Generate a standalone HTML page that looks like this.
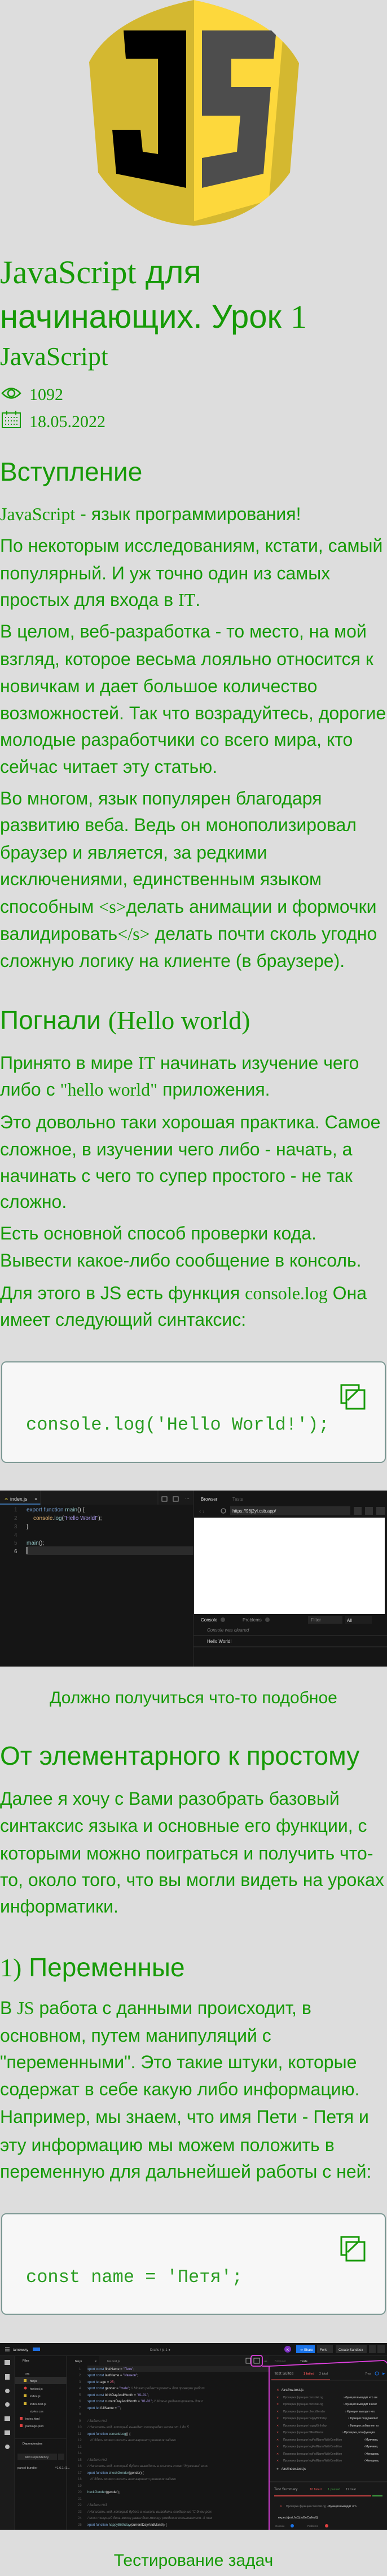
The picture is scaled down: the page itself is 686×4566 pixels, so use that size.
<!DOCTYPE html>
<html><head><meta charset="utf-8"><style>
*{margin:0;padding:0;box-sizing:border-box}
html,body{width:686px;height:4566px;background:#dddddd;overflow:hidden}
body{position:relative;font-family:"Liberation Sans",Arial,sans-serif;color:#169a06}
.t{position:absolute;left:0;white-space:nowrap;font-size:32px;line-height:32px}
.h2{font-size:46px;line-height:46px}
.ti{font-size:58px;line-height:58px}
.s{font-family:"Liberation Serif",serif}
.code{position:absolute;left:2px;width:682px;height:180px;background:#f7f7f7;border:2px solid #7c9893;border-radius:9px}
.code .c{position:absolute;left:42px;font-family:"Liberation Mono","Courier New",monospace;font-size:32px;line-height:32px;color:#2a9d22;white-space:pre}
.cap{position:absolute;left:0;width:686px;text-align:center;font-size:30px;line-height:30px;white-space:nowrap}
svg text{font-family:"Liberation Sans",sans-serif}
.m{font-family:"Liberation Mono",monospace}
</style></head><body>

<!-- logo -->
<svg style="position:absolute;left:0;top:0" width="686" height="402" viewBox="0 0 686 402">
<defs><clipPath id="sh"><path d="M158,110 Q200,30 343,0 Q486,30 530,112 L514,306 Q450,395 343,400 Q236,395 174,306 Z"/></clipPath></defs>
<g clip-path="url(#sh)">
<rect x="150" y="0" width="390" height="402" fill="#d4b830"/>
<polygon points="344,0 540,0 501,70 477,350 466,358 344,392" fill="#fdd83c"/>
</g>
<polygon points="219,54 330,54 330,333 206,308 199,230 249,230 253,269 280,273 280,104 223,104" fill="#000"/>
<polygon points="358,54 481,54 489,62 485,104 410,104 410,154 480,154 467,308 358,333 358,280 420,269 426,205 358,205" fill="#4d4d4d"/>
</svg>

<div class="t ti" style="top:454px"><span class="s">JavaScript</span> для</div>
<div class="t ti" style="top:533px">начинающих. Урок <span class="s">1</span></div>
<div class="t s" style="top:609px;font-size:46px;line-height:46px">JavaScript</div>
<svg style="position:absolute;left:2px;top:684px" width="36" height="26" viewBox="0 0 36 26"><path d="M2,13 Q18,-4 34,13 Q18,30 2,13 Z" fill="none" stroke="#169a06" stroke-width="2.5"/><circle cx="18" cy="13" r="6" fill="none" stroke="#169a06" stroke-width="2.5"/></svg>
<div class="t s" style="top:685px;left:52px;font-size:30px;line-height:30px">1092</div>
<svg style="position:absolute;left:2px;top:727px" width="36" height="33" viewBox="0 0 36 33"><rect x="2" y="5" width="32" height="26" fill="none" stroke="#169a06" stroke-width="2"/><line x1="10" y1="1" x2="10" y2="8" stroke="#169a06" stroke-width="2"/><line x1="26" y1="1" x2="26" y2="8" stroke="#169a06" stroke-width="2"/><g fill="#169a06"><rect x="7" y="12" width="2" height="2"/><rect x="12" y="12" width="2" height="2"/><rect x="17" y="12" width="2" height="2"/><rect x="22" y="12" width="2" height="2"/><rect x="27" y="12" width="2" height="2"/><rect x="7" y="18" width="2" height="2"/><rect x="12" y="18" width="2" height="2"/><rect x="17" y="18" width="2" height="2"/><rect x="22" y="18" width="2" height="2"/><rect x="27" y="18" width="2" height="2"/><rect x="7" y="24" width="2" height="2"/><rect x="12" y="24" width="2" height="2"/><rect x="17" y="24" width="2" height="2"/><rect x="22" y="24" width="2" height="2"/><rect x="27" y="24" width="2" height="2"/></g></svg>
<div class="t s" style="top:733px;left:52px;font-size:30px;line-height:30px">18.05.2022</div>

<div class="t h2" style="top:813px">Вступление</div>
<div class="t" style="top:895px"><span class="s">JavaScript</span> - язык программирования!</div>
<div class="t" style="top:951px">По некоторым исследованиям, кстати, самый</div>
<div class="t" style="top:1000px">популярный. И уж точно один из самых</div>
<div class="t" style="top:1047px">простых для входа в <span class="s">IT</span>.</div>
<div class="t" style="top:1103px">В целом, веб-разработка - то место, на мой</div>
<div class="t" style="top:1152px">взгляд, которое весьма лояльно относится к</div>
<div class="t" style="top:1200px">новичкам и дает большое количество</div>
<div class="t" style="top:1248px">возможностей. Так что возрадуйтесь, дорогие</div>
<div class="t" style="top:1295px">молодые разработчики со всего мира, кто</div>
<div class="t" style="top:1343px">сейчас читает эту статью.</div>
<div class="t" style="top:1399px">Во многом, язык популярен благодаря</div>
<div class="t" style="top:1446px">развитию веба. Ведь он монополизировал</div>
<div class="t" style="top:1495px">браузер и является, за редкими</div>
<div class="t" style="top:1542px">исключениями, единственным языком</div>
<div class="t" style="top:1591px">способным <span class="s">&lt;s&gt;</span>делать анимации и формочки</div>
<div class="t" style="top:1639px">валидировать<span class="s">&lt;/s&gt;</span> делать почти сколь угодно</div>
<div class="t" style="top:1687px">сложную логику на клиенте (в браузере).</div>

<div class="t h2" style="top:1785px">Погнали <span class="s">(Hello world)</span></div>
<div class="t" style="top:1868px">Принято в мире <span class="s">IT</span> начинать изучение чего</div>
<div class="t" style="top:1915px">либо с <span class="s">"hello world"</span> приложения.</div>
<div class="t" style="top:1973px">Это довольно таки хорошая практика. Самое</div>
<div class="t" style="top:2021px">сложное, в изучении чего либо - начать, а</div>
<div class="t" style="top:2068px">начинать с чего то супер простого - не так</div>
<div class="t" style="top:2114px">сложно.</div>
<div class="t" style="top:2170px">Есть основной способ проверки кода.</div>
<div class="t" style="top:2218px">Вывести какое-либо сообщение в консоль.</div>
<div class="t" style="top:2276px">Для этого в JS есть функция <span class="s">console.log</span> Она</div>
<div class="t" style="top:2323px">имеет следующий синтаксис:</div>

<div class="code" style="top:2413px">
<svg style="position:absolute;left:599px;top:38px" width="46" height="46" viewBox="0 0 46 46"><rect x="2" y="2" width="31" height="32" fill="none" stroke="#169a06" stroke-width="3"/><rect x="11" y="11" width="32" height="33" fill="#f7f7f7" stroke="#169a06" stroke-width="3"/><line x1="13" y1="29" x2="32" y2="11" stroke="#169a06" stroke-width="3"/></svg>
<div class="c" style="top:95px">console.log('Hello World!');</div>
</div>

<!-- IDE 1 -->
<svg style="position:absolute;left:0;top:2642px" width="686" height="312" viewBox="0 0 686 312">
<rect width="686" height="312" fill="#151515"/>
<rect x="0" y="0" width="343" height="25" fill="#1a1a1a"/>
<rect x="0" y="23" width="72" height="2" fill="#3a6ea5"/>
<line x1="72" y1="0" x2="72" y2="25" stroke="#2a2a2a"/>
<line x1="280" y1="0" x2="280" y2="25" stroke="#2a2a2a"/>
<text x="8" y="17" font-size="5" fill="#d0c040">JS</text>
<text x="18" y="18" font-size="9" fill="#ddd">index.js</text>
<text x="61" y="18" font-size="9" fill="#ddd">×</text>
<rect x="287" y="11" width="9" height="8" fill="none" stroke="#aaa"/><rect x="307" y="11" width="9" height="8" fill="none" stroke="#aaa"/>
<text x="328" y="17" font-size="8" fill="#aaa">···</text>
<line x1="343" y1="0" x2="343" y2="312" stroke="#2a2a2a"/>
<g class="m" font-size="10" font-family="Liberation Mono,monospace">
<text x="25" y="37" fill="#444">1</text><text x="25" y="52" fill="#444">2</text><text x="25" y="67" fill="#444">3</text><text x="25" y="82" fill="#444">4</text><text x="25" y="96" fill="#444">5</text>
<rect x="47" y="99" width="296" height="15" fill="#2b2b2b"/><rect x="47" y="100" width="1.5" height="13" fill="#ddd"/>
<text x="25" y="111" fill="#aaa">6</text>
<text x="47" y="37" fill="#7aa6da">export function <tspan fill="#8fc0c0">main</tspan><tspan fill="#ccc">() {</tspan></text>
<text x="59" y="52" fill="#e0b070">console<tspan fill="#ccc">.</tspan><tspan fill="#8fc0c0">log</tspan><tspan fill="#ccc">(</tspan><tspan fill="#a896e6">"Hello World!"</tspan><tspan fill="#ccc">);</tspan></text>
<text x="47" y="67" fill="#ccc">}</text>
<text x="47" y="96" fill="#8fc0c0">main<tspan fill="#ccc">();</tspan></text>
</g>
<text x="356" y="18" font-size="8" fill="#ddd">Browser</text><text x="412" y="18" font-size="8" fill="#666">Tests</text>
<text x="353" y="40" font-size="10" fill="#555">‹  ›</text><circle cx="396" cy="36" r="4" fill="none" stroke="#888" stroke-width="1.3"/>
<rect x="408" y="28" width="213" height="16" fill="#2a2a2a"/><text x="412" y="39" font-size="8" fill="#ddd">https://96j2yl.csb.app/</text>
<rect x="627" y="29" width="14" height="14" fill="#333"/><rect x="647" y="29" width="14" height="14" fill="#333"/><rect x="667" y="29" width="15" height="14" fill="#333"/>
<rect x="344" y="48" width="338" height="171" fill="#fff"/>
<text x="356" y="232" font-size="8" fill="#ddd">Console</text><circle cx="395" cy="229" r="4" fill="#444"/>
<text x="430" y="232" font-size="8" fill="#888">Problems</text><circle cx="474" cy="229" r="4" fill="#444"/>
<rect x="546" y="222" width="61" height="14" fill="#262626"/><text x="551" y="232" font-size="8" fill="#888">Filter</text>
<rect x="612" y="222" width="47" height="14" fill="#1e1e1e"/><text x="615" y="233" font-size="8" fill="#ddd">All</text>
<text x="367" y="250" font-size="8" font-style="italic" fill="#777" font-family="Liberation Mono,monospace">Console was cleared</text>
<line x1="343" y1="257" x2="686" y2="257" stroke="#333"/>
<text x="367" y="270" font-size="8" fill="#ddd" font-family="Liberation Mono,monospace">Hello World!</text>
<line x1="343" y1="277" x2="686" y2="277" stroke="#333"/>
</svg>
<div class="cap" style="top:2995px">Должно получиться что-то подобное</div>

<div class="t h2" style="top:3089px">От элементарного к простому</div>
<div class="t" style="top:3172px">Далее я хочу с Вами разобрать базовый</div>
<div class="t" style="top:3220px">синтаксис языка и основные его функции, с</div>
<div class="t" style="top:3269px">которыми можно поиграться и получить что-</div>
<div class="t" style="top:3316px">то, около того, что вы могли видеть на уроках</div>
<div class="t" style="top:3363px">информатики.</div>
<div class="t h2" style="top:3464px"><span class="s">1)</span> Переменные</div>
<div class="t" style="top:3543px">В <span class="s">JS</span> работа с данными происходит, в</div>
<div class="t" style="top:3592px">основном, путем манипуляций с</div>
<div class="t" style="top:3639px">"переменными". Это такие штуки, которые</div>
<div class="t" style="top:3687px">содержат в себе какую либо информацию.</div>
<div class="t" style="top:3736px">Например, мы знаем, что имя Пети - Петя и</div>
<div class="t" style="top:3786px">эту информацию мы можем положить в</div>
<div class="t" style="top:3833px">переменную для дальнейшей работы с ней:</div>

<div class="code" style="top:3923px">
<svg style="position:absolute;left:599px;top:38px" width="46" height="46" viewBox="0 0 46 46"><rect x="2" y="2" width="31" height="32" fill="none" stroke="#169a06" stroke-width="3"/><rect x="11" y="11" width="32" height="33" fill="#f7f7f7" stroke="#169a06" stroke-width="3"/><line x1="13" y1="29" x2="32" y2="11" stroke="#169a06" stroke-width="3"/></svg>
<div class="c" style="top:96px">const name = 'Петя';</div>
</div>

<!-- IDE 2 -->
<svg style="position:absolute;left:0;top:4153px" width="686" height="331" viewBox="0 0 686 331">
<rect width="686" height="331" fill="#151515"/>
<rect width="686" height="22" fill="#151515"/><line x1="0" y1="22" x2="686" y2="22" stroke="#2a2a2a"/>
<g stroke="#bbb"><line x1="9" y1="8" x2="17" y2="8"/><line x1="9" y1="11" x2="17" y2="11"/><line x1="9" y1="14" x2="17" y2="14"/></g>
<text x="23" y="14" font-size="6" fill="#ddd">tarnowsky</text><rect x="58" y="8" width="13" height="6" fill="#1f6fe0"/>
<text x="266" y="14" font-size="6" fill="#999">Drafts  /  js-1 ●</text>
<circle cx="510" cy="11" r="6" fill="#7b2fbf"/><text x="508" y="14" font-size="6" fill="#fff">K</text>
<rect x="525" y="4" width="33" height="14" fill="#1a73e8"/><text x="532" y="14" font-size="6" fill="#fff">➔ Share</text>
<rect x="562" y="4" width="28" height="14" fill="#2c2c2c"/><text x="567" y="14" font-size="6" fill="#ddd">Fork</text>
<rect x="595" y="4" width="55" height="14" fill="#2c2c2c"/><text x="600" y="14" font-size="6" fill="#ddd">Create Sandbox</text>
<rect x="654" y="4" width="12" height="14" fill="#2c2c2c"/><rect x="669" y="4" width="13" height="14" fill="#2c2c2c"/>
<rect x="0" y="23" width="26" height="308" fill="#1b1b1b"/>
<g fill="#bbb"><rect x="8" y="30" width="10" height="9"/><rect x="9" y="55" width="8" height="10"/><circle cx="13" cy="85" r="4"/><circle cx="13" cy="109" r="4"/><rect x="8" y="130" width="10" height="8"/><rect x="8" y="155" width="10" height="8"/><circle cx="13" cy="184" r="4"/></g>
<line x1="118" y1="23" x2="118" y2="331" stroke="#2a2a2a"/><line x1="26" y1="23" x2="26" y2="331" stroke="#2a2a2a"/>
<g font-size="5.5" fill="#bbb">
<text x="40" y="33" fill="#ddd">Files</text>
<text x="45" y="56">src</text>
<rect x="27" y="60" width="91" height="13" fill="#2b2b2b"/><rect x="42" y="64" width="5" height="5" fill="#d0b030"/><text x="53" y="69" fill="#ddd">hw.js</text>
<circle cx="45" cy="80" r="2.5" fill="#e04040"/><text x="53" y="83">hw.test.js</text>
<rect x="42" y="91" width="5" height="5" fill="#d0b030"/><text x="53" y="96">index.js</text>
<rect x="42" y="105" width="5" height="5" fill="#d0b030"/><text x="53" y="110">index.test.js</text>
<text x="53" y="123">styles.css</text>
<rect x="35" y="131" width="5" height="5" fill="#e04040"/><text x="45" y="136">index.html</text>
<rect x="35" y="144" width="5" height="5" fill="#e04040"/><text x="45" y="149">package.json</text>
<line x1="27" y1="169" x2="118" y2="169" stroke="#2a2a2a"/>
<text x="40" y="180" fill="#ddd">Dependencies</text>
<rect x="31" y="196" width="70" height="11" fill="#252525"/><text x="44" y="204">Add Dependency</text><rect x="103" y="196" width="11" height="11" fill="#252525"/>
<text x="31" y="223">parcel-bundler</text><text x="98" y="223">^1.6.1 (1...</text>
</g>
<rect x="119" y="23" width="358" height="16" fill="#1a1a1a"/><rect x="119" y="23" width="56" height="16" fill="#151515"/>
<text x="133" y="34" font-size="5.5" fill="#ddd">hw.js</text><text x="168" y="34" font-size="5.5" fill="#ddd">×</text>
<text x="190" y="34" font-size="5.5" fill="#888">hw.test.js</text>
<g font-family="Liberation Mono,monospace" font-size="6">
<rect x="155" y="40" width="322" height="11" fill="#232323"/>
<g fill="#555"><text x="140" y="48">1</text><text x="140" y="59">2</text><text x="140" y="71">3</text><text x="140" y="82">4</text><text x="140" y="94">5</text><text x="140" y="105">6</text><text x="140" y="117">7</text><text x="140" y="128">8</text><text x="140" y="140">9</text><text x="138" y="151">10</text><text x="138" y="163">11</text><text x="138" y="174">12</text><text x="138" y="186">13</text><text x="138" y="197">14</text><text x="138" y="209">15</text><text x="138" y="220">16</text><text x="138" y="232">17</text><text x="138" y="243">18</text><text x="138" y="255">19</text><text x="138" y="266">20</text><text x="138" y="278">21</text><text x="138" y="289">22</text><text x="138" y="301">23</text><text x="138" y="312">24</text><text x="138" y="324">25</text></g>
<g fill="#ddd">
<text x="155" y="48"><tspan fill="#7aa6da">xport const</tspan> firstName = <tspan fill="#a896e6">"Петя"</tspan>;</text>
<text x="155" y="59"><tspan fill="#7aa6da">xport const</tspan> lastName = <tspan fill="#a896e6">"Иванов"</tspan>;</text>
<text x="155" y="71"><tspan fill="#7aa6da">xport let</tspan> age = <tspan fill="#e06080">25</tspan>;</text>
<text x="155" y="82"><tspan fill="#7aa6da">xport const</tspan> gender = <tspan fill="#a896e6">"male"</tspan>; <tspan fill="#666" font-style="italic">// Можно редактировать для проверки работ</tspan></text>
<text x="155" y="94"><tspan fill="#7aa6da">xport const</tspan> birthDayAndMonth = <tspan fill="#a896e6">"01-01"</tspan>;</text>
<text x="155" y="105"><tspan fill="#7aa6da">xport const</tspan> currentDayAndMonth = <tspan fill="#a896e6">"01-01"</tspan>; <tspan fill="#666" font-style="italic">// Можно редактировать для п</tspan></text>
<text x="155" y="117"><tspan fill="#7aa6da">xport let</tspan> fullName = <tspan fill="#a896e6">""</tspan>;</text>
<g fill="#666" font-style="italic"><text x="155" y="140">/ Задача №1</text><text x="155" y="151">/ Написать код, который выведет поочередно числа от 1 до 5</text><text x="160" y="174">/// Здесь можно писать ваш вариант решения задачи</text>
<text x="155" y="209">/ Задача №2</text><text x="155" y="220">/ Написать код, который будет выводить в консоль слово "Мужчина" если</text><text x="160" y="243">/// Здесь можно писать ваш вариант решения задачи</text>
<text x="155" y="289">/ Задача №3</text><text x="155" y="301">/ Написать код, который будет в консоль выводить сообщение "С днем рож</text><text x="155" y="312">/ если текущий день-месяц равен дню-месяцу рождения пользователя. А так</text></g>
<text x="155" y="163"><tspan fill="#7aa6da">xport function</tspan> <tspan fill="#8fc0c0">consoleLog</tspan>() {</text>
<text x="155" y="232"><tspan fill="#7aa6da">xport function</tspan> <tspan fill="#8fc0c0">checkGender</tspan>(gender) {</text>
<text x="155" y="266"><tspan fill="#8fc0c0">heckGender</tspan>(gender);</text>
<text x="155" y="324"><tspan fill="#7aa6da">xport function</tspan> <tspan fill="#8fc0c0">happyBirthday</tspan>(currentDayAndMonth) {</text>
</g></g>
<rect x="477" y="23" width="209" height="308" fill="#181818"/>
<text x="487" y="34" font-size="5.5" fill="#555">Browser</text><text x="532" y="34" font-size="5.5" fill="#ddd">Tests</text>
<text x="486" y="56" font-size="7" fill="#999">Test Suites</text>
<text x="538" y="56" font-size="5.5" fill="#e05050" font-weight="bold">1 failed</text><text x="566" y="56" font-size="5.5" fill="#999">2 total</text>
<text x="647" y="56" font-size="5.5" fill="#999">7ms</text><circle cx="668" cy="54" r="3" fill="none" stroke="#1a73e8"/><text x="678" y="56" font-size="6" fill="#1a73e8">▶</text>
<line x1="481" y1="65" x2="585" y2="65" stroke="#c04040" stroke-width="1.2"/><line x1="481" y1="66" x2="686" y2="66" stroke="#2a2a2a"/>
<text x="490" y="85" font-size="6" fill="#e05050">✕</text><text x="499" y="85" font-size="6.5" fill="#ddd">/src/hw.test.js</text>
<g font-size="5">
<g fill="#e05050"><text x="490" y="98">✕</text><text x="490" y="110">✕</text><text x="490" y="123">✕</text><text x="490" y="135">✕</text><text x="490" y="148">✕</text><text x="490" y="160">✕</text><text x="490" y="173">✕</text><text x="490" y="185">✕</text><text x="490" y="198">✕</text><text x="490" y="210">✕</text></g>
<g fill="#777"><text x="502" y="98">Проверка функции consoleLog</text><text x="502" y="110">Проверка функции consoleLog</text><text x="502" y="123">Проверка функции checkGender</text><text x="502" y="135">Проверка функции happyBirthday</text><text x="502" y="148">Проверка функции happyBirthday</text><text x="502" y="160">Проверка функции fillFullName</text><text x="502" y="173">Проверка функции logFullNameWithCondition</text><text x="502" y="185">Проверка функции logFullNameWithCondition</text><text x="502" y="198">Проверка функции logFullNameWithCondition</text><text x="502" y="210">Проверка функции logFullNameWithCondition</text></g>
<g fill="#ddd"><text x="609" y="98">› Функция выводит что ли</text><text x="609" y="110">› Функция выводит в конс</text><text x="612" y="123">› Функция выводит что</text><text x="617" y="135">› Функция поздравляет</text><text x="617" y="148">› Функция добавляет го</text><text x="607" y="160">› Проверка, что функция</text><text x="645" y="173">› Мужчина,</text><text x="645" y="185">› Мужчина,</text><text x="645" y="198">› Женщина,</text><text x="645" y="210">› Женщина,</text></g>
</g>
<circle cx="492" cy="223" r="1.5" fill="#777"/><text x="499" y="225" font-size="6" fill="#ddd">/src/index.test.js</text>
<line x1="477" y1="246" x2="686" y2="246" stroke="#333"/>
<text x="486" y="261" font-size="6.5" fill="#999">Test Summary</text>
<text x="549" y="261" font-size="5.5" fill="#e05050">10 failed</text><text x="581" y="261" font-size="5.5" fill="#40a040">1 passed</text><text x="613" y="261" font-size="5.5" fill="#999">11 total</text>
<rect x="486" y="270" width="172" height="2" fill="#c04040"/><rect x="660" y="270" width="18" height="2" fill="#40a040"/>
<text x="496" y="291" font-size="5" fill="#e05050">✕</text><text x="507" y="291" font-size="5" fill="#888">Проверка функции consoleLog  › <tspan fill="#ddd">Функция выводит что</tspan></text>
<text x="493" y="311" font-size="5.5" fill="#ddd" font-family="Liberation Mono,monospace">expect(jest.fn()).toBeCalled()</text>
<text x="488" y="326" font-size="4.5" fill="#777">Console</text><circle cx="518" cy="324" r="3" fill="#1a73e8"/><text x="545" y="326" font-size="4.5" fill="#777">Problems</text><circle cx="579" cy="324" r="3" fill="#e04040"/>
<g fill="none" stroke="#e040e0" stroke-width="1.8"><rect x="445" y="22" width="20" height="19" rx="4"/><path d="M465,41 L478,41 Q580,36 680,31 Q684,32 686,36"/><path d="M477,41 L477,331"/></g>
<rect x="450" y="27" width="10" height="9" fill="none" stroke="#ccc" stroke-width="0.8"/>
<rect x="436" y="27" width="8" height="9" fill="none" stroke="#ccc" stroke-width="0.8"/>
<text x="467" y="34" font-size="7" fill="#ccc">···</text>
</svg>
<div class="cap" style="top:4524px">Тестирование задач</div>
</body></html>
